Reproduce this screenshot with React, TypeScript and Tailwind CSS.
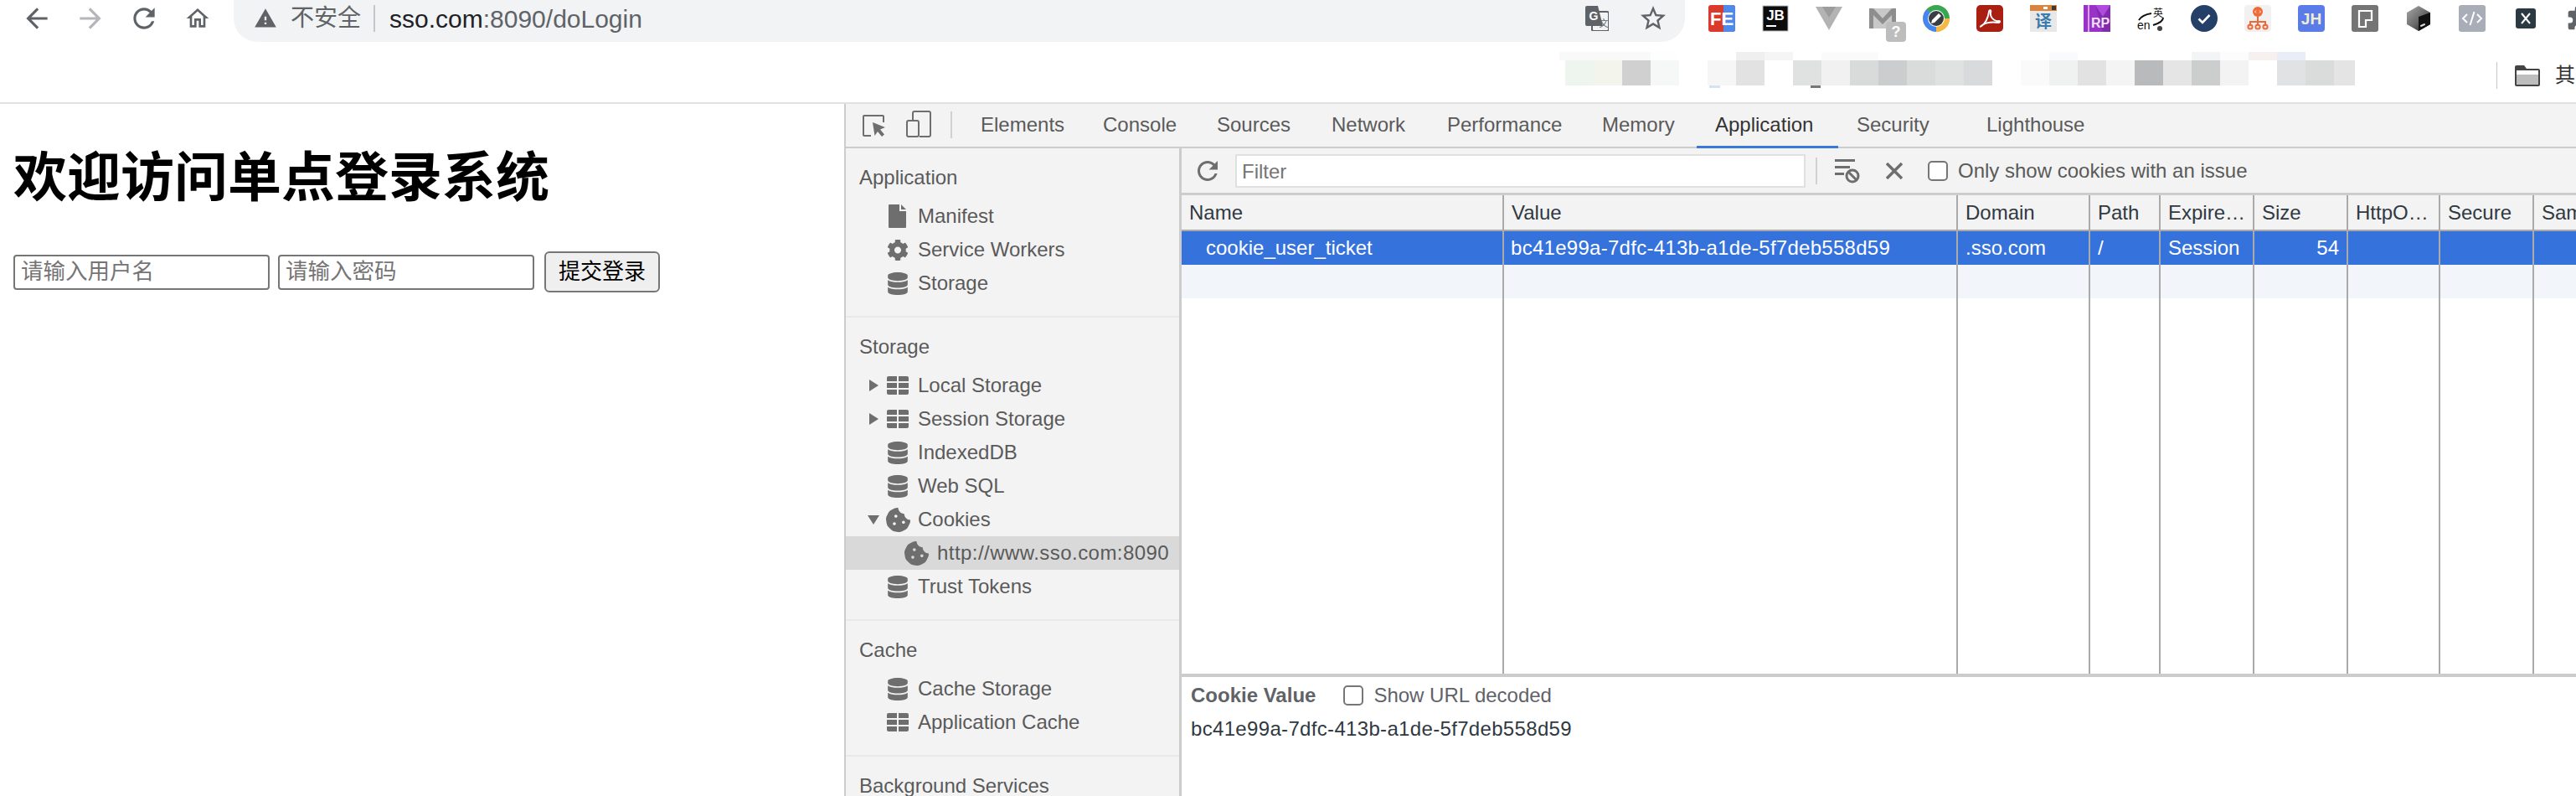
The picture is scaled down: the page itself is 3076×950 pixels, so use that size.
import { FaCog, FaCookieBite, FaDatabase } from "react-icons/fa";

const SANS = "font-['Liberation_Sans','Noto_Sans_CJK_SC',sans-serif]";

// top row of the blurred bookmarks, then the bottom row
const mosaicTop = [
  "bg-[#f8f9f8]", "bg-[#f8f9f8]", "bg-[#f8f9f8]", "bg-[#fdfefd]", "bg-white", "bg-white", "bg-[#efefef]", "bg-[#f5f5f5]", "bg-white", "bg-[#fafafa]",
  "bg-[#fafafa]", "bg-white", "bg-white", "bg-white", "bg-white", "bg-white", "bg-white", "bg-[#f9fafc]", "bg-white", "bg-white",
  "bg-white", "bg-white", "bg-[#f3f4f6]", "bg-[#fcfcfc]", "bg-[#f6f1ee]", "bg-[#e9edf8]",
];
const mosaicBottom = [
  "bg-[#eef5ee]", "bg-[#f3f5ec]", "bg-[#d0d0d0]", "bg-[#f6f7f7]", "bg-white", "bg-[#f6f6f6]", "bg-[#e2e2e2]", "bg-white", "bg-[#e0e2e2]", "bg-[#f1f1f1]",
  "bg-[#d9dbdb]", "bg-[#cbcdcf]", "bg-[#dadcdc]", "bg-[#e0e2e2]", "bg-[#d8dadc]", "bg-white", "bg-[#fafafa]", "bg-[#f0f2f2]", "bg-[#e2e2e2]", "bg-[#f4f4f4]",
  "bg-[#b9babc]", "bg-[#e5e5e5]", "bg-[#cccdcd]", "bg-[#f3f3f4]", "bg-white", "bg-[#e0e2e4]", "bg-[#dadcdb]", "bg-[#e4e4e4]",
];

const tabs = [
  { name: "Elements", w: "w-[146px]" },
  { name: "Console", w: "w-[136px]" },
  { name: "Sources", w: "w-[137px]" },
  { name: "Network", w: "w-[138px]" },
  { name: "Performance", w: "w-[185px]" },
  { name: "Memory", w: "w-[135px]" },
  { name: "Application", w: "w-[169px]", active: true },
  { name: "Security", w: "w-[155px]" },
  { name: "Lighthouse", w: "w-[150px]" },
];

const columns = [
  { name: "Name", w: "w-[385px]", cell: "cookie_user_ticket", pad: "pl-[29px]" },
  { name: "Value", w: "w-[542px]", cell: "bc41e99a-7dfc-413b-a1de-5f7deb558d59", pad: "pl-2 tracking-[0.28px]" },
  { name: "Domain", w: "w-[158px]", cell: ".sso.com", pad: "pl-[9px]" },
  { name: "Path", w: "w-[84px]", cell: "/", pad: "pl-[9px]" },
  { name: "Expire…", w: "w-[112px]", cell: "Session", pad: "pl-[9px]" },
  { name: "Size", w: "w-[112px]", cell: "54", pad: "pr-[9px] text-right" },
  { name: "HttpO…", w: "w-[110px]", cell: "", pad: "pl-2" },
  { name: "Secure", w: "w-[112px]", cell: "", pad: "pl-2" },
  { name: "SameSite", w: "w-[120px]", cell: "", pad: "pl-2" },
];

function Md({ d, className }: { d: string; className: string }) {
  return (
    <svg viewBox="0 0 24 24" className={className} fill="currentColor">
      <path d={d} />
    </svg>
  );
}

const REFRESH = "M17.65 6.35C16.2 4.9 14.21 4 12 4c-4.42 0-7.99 3.58-7.99 8s3.57 8 7.99 8c3.73 0 6.84-2.55 7.73-6h-2.08c-.82 2.33-3.04 4-5.65 4-3.31 0-6-2.69-6-6s2.69-6 6-6c1.66 0 3.14.69 4.22 1.78L13 11h7V4l-2.35 2.35z";
const ARROW = "M20 11H7.83l5.59-5.59L12 4l-8 8 8 8 1.41-1.41L7.83 13H20v-2z";

function GridIcon() {
  return (
    <svg viewBox="0 0 26 22" className="w-[26px] h-[22px]" fill="#6e6e6e">
      <path d="M0 2a2 2 0 0 1 2-2h10v6H0zM14 0h10a2 2 0 0 1 2 2v4H14zM0 8h12v6H0zM14 8h12v6H14zM0 16h12v6H2a2 2 0 0 1-2-2zM14 16h12v4a2 2 0 0 1-2 2H14z" />
    </svg>
  );
}

function FileIcon() {
  return (
    <svg viewBox="0 0 22 28" className="w-[22px] h-[28px]" fill="#6e6e6e">
      <path d="M1 0h12v8h8v19a1 1 0 0 1-1 1H1a1 1 0 0 1-1-1V1a1 1 0 0 1 1-1zM15 0l6 6h-6z" />
    </svg>
  );
}

function Tri({ open }: { open?: boolean }) {
  return (
    <svg viewBox="0 0 14 14" className="w-[14px] h-[14px]" fill="#6e6e6e">
      {open ? <path d="M0 2h14L7 13z" /> : <path d="M2 0l11 7-11 7z" />}
    </svg>
  );
}

type RowProps = { label: string; icon: "file" | "cog" | "db" | "grid" | "cookie"; arrow?: "open" | "closed"; nested?: boolean; selected?: boolean };

function SideRow({ label, icon, arrow, nested, selected }: RowProps) {
  return (
    <div className={`h-10 flex items-center whitespace-nowrap ${nested ? "pl-[71px]" : "pl-[26px]"} ${selected ? "bg-[#d9d9d9]" : ""}`}>
      {!nested && <span className="w-[23px] flex">{arrow && <Tri open={arrow === "open"} />}</span>}
      <span className="w-[26px] flex justify-center text-[#6e6e6e] text-[27px]">
        {icon === "file" && <FileIcon />}
        {icon === "cog" && <FaCog />}
        {icon === "db" && <FaDatabase />}
        {icon === "grid" && <GridIcon />}
        {icon === "cookie" && <FaCookieBite className="text-[29px] shrink-0" />}
      </span>
      <span className={nested ? "ml-[12px] tracking-[0.45px]" : "ml-[11px]"}>{label}</span>
    </div>
  );
}

function Section({ title, rows }: { title: string; rows: RowProps[] }) {
  return (
    <div className="pt-[15px] pb-[19px] border-b-2 border-[#e9e9e9] last:border-b-0">
      <div className="h-10 leading-10 pl-[16px] mb-[6px] text-[#5a5a5a]">{title}</div>
      {rows.map((r) => (
        <SideRow key={r.label} {...r} />
      ))}
    </div>
  );
}

function Checkbox() {
  return <span className="w-[24px] h-[24px] shrink-0 bg-white border-2 border-[#767676] rounded-[5px]" />;
}

// extension icons, 32px boxes
function Extensions() {
  return (
    <div className="flex items-center gap-8 ml-7 pb-[6px]">
      <svg viewBox="0 0 32 32" className="w-8 h-8">
        <rect width="32" height="32" rx="3" fill="#d93a2b" />
        <path d="M18 0h11a3 3 0 0 1 3 3v26a3 3 0 0 1-3 3H18z" fill="#4f8ae8" />
        <text x="16" y="24" textAnchor="middle" fontSize="22" fontWeight="700" fill="#fff" fontFamily="Liberation Sans">FE</text>
      </svg>
      <svg viewBox="0 0 32 32" className="w-8 h-8">
        <rect width="30" height="30" x="1" y="1" fill="#0c0c0c" stroke="#bbb" />
        <text x="16" y="18" textAnchor="middle" fontSize="17" fontWeight="700" fill="#fff" fontFamily="Liberation Sans">JB</text>
        <rect x="5" y="24" width="12" height="2" fill="#fff" />
      </svg>
      <svg viewBox="0 0 32 32" className="w-8 h-8">
        <path d="M0 2h32L16 30z" fill="#b3b3b3" />
        <path d="M8 2h16l-8 13z" fill="#9c9c9c" />
      </svg>
      <div className="relative w-8 h-8">
        <svg viewBox="0 0 32 32" className="w-8 h-8">
          <rect y="4" width="32" height="24" fill="#c8c8c8" />
          <path d="M0 4h5l11 12L27 4h5v24h-5V12L16 23 5 12v16H0z" fill="#8e8e8e" />
        </svg>
        <span className="absolute left-[20px] top-[20px] w-[24px] h-[24px] rounded-[4px] bg-[#bdbdbd] text-white text-[18px] font-bold leading-[24px] text-center">?</span>
      </div>
      <svg viewBox="0 0 32 32" className="w-8 h-8">
        <circle cx="16" cy="16" r="16" fill="#f4b942" />
        <path d="M16 16L32 16A16 16 0 0 0 4.5 5z" fill="#34a853" />
        <path d="M16 16L4.5 5A16 16 0 0 0 16 32z" fill="#4285f4" />
        <path d="M16 16L16 32A16 16 0 0 0 32 16z" fill="#f4b942" />
        <circle cx="16" cy="16" r="10" fill="#fff" />
        <circle cx="16" cy="16" r="9" fill="#3a3d42" />
        <path d="M10 22l1-4 8-8 3 3-8 8z" fill="#fff" />
      </svg>
      <svg viewBox="0 0 32 32" className="w-8 h-8">
        <rect width="32" height="32" rx="5" fill="#a91f12" />
        <path d="M6 25c4-2 8-9 9-17 .3-3 3-2 2 1-1 6 5 11 10 10 2 0 1 2-1 2-7-1-13-1-19 3-2 2-3 2-1 1z" fill="none" stroke="#fff" strokeWidth="2" />
      </svg>
      <svg viewBox="0 0 32 32" className="w-8 h-8">
        <rect width="32" height="32" fill="#e8e8e8" />
        <rect width="32" height="7" fill="#d9843f" />
        <rect x="16" y="2" width="5" height="3" fill="#fff" />
        <rect x="26" y="1" width="5" height="5" fill="#3a3a3a" />
        <text x="16" y="27" textAnchor="middle" fontSize="20" fontWeight="700" fill="#3d7bad" fontFamily="Noto Sans CJK SC">译</text>
      </svg>
      <svg viewBox="0 0 32 32" className="w-8 h-8">
        <rect width="32" height="32" fill="#9a32c9" />
        <path d="M14 0h18v32h-9z" fill="#7a2aa6" opacity="0.8" />
        <path d="M14 0h18L23 14z" fill="#b14be0" />
        <rect x="5" width="2" height="32" fill="#d9a6ee" />
        <text x="20" y="27" textAnchor="middle" fontSize="16" fontWeight="700" fill="#f2e3fa" fontFamily="Liberation Sans">RP</text>
      </svg>
      <svg viewBox="0 0 32 32" className="w-8 h-8">
        <text x="19" y="14" fontSize="12" fill="#111" fontFamily="Noto Sans CJK SC">英</text>
        <text x="0" y="29" fontSize="14" fill="#111" fontFamily="Liberation Sans">en</text>
        <path d="M2 18C5 13 10 11 17 10M31 15c0 4-5 7-12 9" fill="none" stroke="#111" strokeWidth="2" />
        <circle cx="27" cy="28" r="3" fill="#444" />
      </svg>
      <svg viewBox="0 0 32 32" className="w-8 h-8">
        <circle cx="16" cy="16" r="16" fill="#254068" />
        <path d="M9.5 16.5l4.5 4.5 8.5-9" fill="none" stroke="#fff" strokeWidth="2.6" />
      </svg>
      <svg viewBox="0 0 32 32" className="w-8 h-8">
        <rect width="32" height="32" rx="4" fill="#f1f1f1" />
        <g fill="none" stroke="#ee6a3a" strokeWidth="2">
          <path d="M16 13v6M7 25v-5h18v5M16 19v6" />
          <circle cx="7" cy="26" r="2.6" />
          <circle cx="16" cy="26" r="2.6" />
          <circle cx="25" cy="26" r="2.6" />
        </g>
        <circle cx="16" cy="8" r="6" fill="#ee6a3a" />
        <path d="M14 6.5L12.5 8 14 9.5M18 6.5L19.5 8 18 9.5" fill="none" stroke="#fff" strokeWidth="0.9" />
      </svg>
      <svg viewBox="0 0 32 32" className="w-8 h-8">
        <rect width="32" height="32" rx="4" fill="#5b7ce8" />
        <text x="16" y="23" textAnchor="middle" fontSize="19" fontWeight="700" fill="#f1edd4" fontFamily="Liberation Sans">JH</text>
      </svg>
      <svg viewBox="0 0 32 32" className="w-8 h-8">
        <rect width="32" height="32" rx="3" fill="#757575" />
        <path d="M9 7h15v11h-7v8H9z" fill="none" stroke="#fff" strokeWidth="2.2" />
      </svg>
      <svg viewBox="0 0 32 32" className="w-8 h-8">
        <defs>
          <linearGradient id="cube" x1="0" x2="1" y1="0" y2="1">
            <stop offset="0" stopColor="#aaa" />
            <stop offset="0.55" stopColor="#666" />
            <stop offset="1" stopColor="#111" />
          </linearGradient>
        </defs>
        <path d="M16 1l14 8v14l-14 8-14-8V9z" fill="url(#cube)" />
        <path d="M16 14l14-5v14l-14 8z" fill="#111" />
        <rect x="18" y="23" width="6" height="2" fill="#ddd" transform="rotate(-25 21 24)" />
      </svg>
      <svg viewBox="0 0 32 32" className="w-8 h-8">
        <rect width="32" height="32" rx="3" fill="#a9adb8" />
        <path d="M10 11l-5 5 5 5M22 11l5 5-5 5M18.5 8l-5 16" fill="none" stroke="#fff" strokeWidth="2" />
      </svg>
      <svg viewBox="0 0 32 32" className="w-8 h-8">
        <rect x="4" y="4" width="24" height="24" rx="3" fill="#2b3a42" />
        <path d="M11 10l10 12M21 10L11 22" fill="none" stroke="#fff" strokeWidth="2" />
      </svg>
      <svg viewBox="0 0 24 24" className="w-8 h-8 shrink-0" fill="#5f6368">
        <path d="M20.5 11H19V7a2 2 0 0 0-2-2h-4V3.5a2.5 2.5 0 0 0-5 0V5H4a2 2 0 0 0-2 2v3.8h1.5a2.7 2.7 0 0 1 0 5.4H2V20a2 2 0 0 0 2 2h3.8v-1.5a2.7 2.7 0 0 1 5.4 0V22H17a2 2 0 0 0 2-2v-4h1.5a2.5 2.5 0 0 0 0-5z" />
      </svg>
    </div>
  );
}

export default function App() {
  return (
    <div className={`w-[3076px] h-[950px] overflow-hidden bg-white flex flex-col ${SANS}`}>
      {/* chrome toolbar */}
      <div className="h-[50px] shrink-0 flex items-center overflow-hidden">
        <div className="flex items-center gap-[26px] pl-[25px] pb-[6px]">
          <Md d={ARROW} className="w-[38px] h-[38px] text-[#5f6368]" />
          <Md d={ARROW} className="w-[38px] h-[38px] text-[#b4b6b9] -scale-x-100" />
          <Md d={REFRESH} className="w-[38px] h-[38px] text-[#5f6368]" />
          <Md d="M12 5.69l5 4.5V18h-2v-6H9v6H7v-7.81l5-4.5M12 3L2 12h3v8h6v-6h2v6h6v-8h3L12 3z" className="ml-[3px] w-8 h-8 text-[#5f6368]" />
        </div>
        <div className="ml-[27px] w-[1733px] h-[50px] shrink-0 bg-[#f1f3f4] rounded-b-[28px] flex items-center pl-[24px] pr-[20px] pb-[6px] whitespace-nowrap">
          <Md d="M1 21h22L12 2 1 21zm12-3h-2v-2h2v2zm0-4h-2v-4h2v4z" className="w-7 h-7 text-[#5f6368]" />
          <span className="ml-[16px] text-[28px] text-[#5f6368]">不安全</span>
          <span className="ml-[15px] w-[2px] h-8 bg-[#c4c6c9]" />
          <span className="ml-[17px] text-[30px] text-[#5f6368]">
            <span className="text-[#202124]">sso.com</span>:8090/doLogin
          </span>
          <div className="ml-auto flex items-center gap-[35px]">
            <svg viewBox="0 0 28 30" className="w-[28px] h-[30px]">
              <rect x="8" y="7" width="20" height="23" rx="2" fill="#f1f3f4" stroke="#5f6368" strokeWidth="2" />
              <path d="M2 0h13l6 24H2a2 2 0 0 1-2-2V2a2 2 0 0 1 2-2z" fill="#5f6368" />
              <text x="10" y="17" textAnchor="middle" fontSize="14" fontWeight="700" fill="#fff" fontFamily="Liberation Sans">G</text>
              <text x="22" y="25" textAnchor="middle" fontSize="11" fill="#5f6368" fontFamily="Noto Sans CJK SC">文</text>
            </svg>
            <Md d="M22 9.24l-7.19-.62L12 2 9.19 8.63 2 9.24l5.46 4.73L5.82 21 12 17.27 18.18 21l-1.63-7.03L22 9.24zM12 15.4l-3.76 2.27 1-4.28-3.32-2.88 4.38-.38L12 6.1l1.71 4.04 4.38.38-3.32 2.88 1 4.28L12 15.4z" className="w-9 h-9 text-[#5f6368]" />
          </div>
        </div>
        <Extensions />
      </div>

      {/* bookmarks bar */}
      <div className="h-[74px] shrink-0 border-b-2 border-[#dfe1e5] flex items-start pt-[12px] pl-[1862px] whitespace-nowrap">
        <div className="w-[1119px] shrink-0 flex flex-col">
          <div className="flex h-[10px]">
            <span className="w-[7px] bg-[#f8f9f8]" />
            {mosaicTop.map((c, i) => (
              <span key={i} className={`w-[34px] ${c}`} />
            ))}
          </div>
          <div className="flex h-[30px] w-[950px] overflow-hidden pl-[7px]">
            {mosaicBottom.map((c, i) => (
              <span key={i} className={`w-[34px] shrink-0 ${c}`} />
            ))}
          </div>
          <div className="flex h-[3px] pl-[179px]">
            <span className="w-[13px] bg-[#d8e0f5]" />
            <span className="ml-[108px] w-[12px] bg-[#777]" />
          </div>
        </div>
        <span className="mt-[12px] w-[1px] h-[32px] bg-[#c4c6c9]" />
        <svg viewBox="0 0 30 26" className="ml-[21px] mt-[15px] w-[30px] h-[26px]">
          <path d="M2 1h9l3 4h14a2 2 0 0 1 2 2v17a2 2 0 0 1-2 2H2a2 2 0 0 1-2-2V3a2 2 0 0 1 2-2z" fill="#444" />
          <path d="M2 7h26v5H2z" fill="#fff" />
          <path d="M2 12h26v12H2z" fill="#bdbdbd" />
        </svg>
        <span className="ml-[18px] mt-[12px] text-[24px] leading-[32px] text-[#333]">其</span>
      </div>

      <div className="flex-1 flex min-h-0">
        {/* page */}
        <div className="w-[1008px] shrink-0 pl-4 text-black">
          <h1 className="pt-[45px] text-[64px] leading-[74px] font-bold font-['Noto_Sans_CJK_SC',sans-serif]">欢迎访问单点登录系统</h1>
          <form className="mt-[57px] flex items-center text-[26.5px]">
            <input placeholder="请输入用户名" className="w-[306px] h-[42px] pl-[7px] pr-[6px] border-2 border-[#767676] rounded-[4px] placeholder:text-[#757575]" />
            <input placeholder="请输入密码" className="ml-[10px] w-[306px] h-[42px] pl-[7px] pr-[6px] border-2 border-[#767676] rounded-[4px] placeholder:text-[#757575]" />
            <button type="button" className="ml-[12px] w-[138px] h-[49px] text-[26px] bg-[#efefef] border-2 border-[#767676] rounded-[6px]">提交登录</button>
          </form>
        </div>

        {/* devtools */}
        <div className="flex-1 min-w-0 flex flex-col border-l-2 border-[#ccc] text-[24px] text-[#5a5a5a] overflow-hidden">
          <div className="h-[53px] shrink-0 bg-[#f3f3f3] border-b-2 border-[#ccc] flex items-start pl-[20px] whitespace-nowrap">
            <svg viewBox="0 0 28 26" className="mt-[13px] w-[28px] h-[26px]" fill="none" stroke="#6e6e6e" strokeWidth="2">
              <path d="M10 25H2a1 1 0 0 1-1-1V2a1 1 0 0 1 1-1h22a1 1 0 0 1 1 1v7" />
              <path d="M12 9l15 6-6 2.5 5 6-3 2.5-5-6-3.500 5z" fill="#6e6e6e" stroke="none" />
            </svg>
            <svg viewBox="0 0 30 32" className="ml-[24px] mt-[8px] w-[30px] h-[32px]" fill="none" stroke="#6e6e6e" strokeWidth="2">
              <path d="M8 12V3a2 2 0 0 1 2-2h17a2 2 0 0 1 2 2v26a2 2 0 0 1-2 2H16" />
              <rect x="1" y="12" width="14" height="19" rx="2" />
            </svg>
            <span className="ml-[23px] mt-[9px] w-[2px] h-[32px] bg-[#d0d0d0]" />
            <div className="ml-[12px] flex">
              {tabs.map((t) => (
                <div key={t.name} className={`h-[53px] leading-[50px] pl-[22px] ${t.w} ${t.active ? "border-b-[3px] border-[#3879d9] text-[#333]" : ""}`}>
                  {t.name}
                </div>
              ))}
            </div>
          </div>

          <div className="flex-1 flex min-h-0">
            {/* sidebar */}
            <div className="w-[401px] shrink-0 bg-[#f3f3f3] border-r-[3px] border-[#ccc] overflow-hidden">
              <Section
                title="Application"
                rows={[
                  { label: "Manifest", icon: "file" },
                  { label: "Service Workers", icon: "cog" },
                  { label: "Storage", icon: "db" },
                ]}
              />
              <Section
                title="Storage"
                rows={[
                  { label: "Local Storage", icon: "grid", arrow: "closed" },
                  { label: "Session Storage", icon: "grid", arrow: "closed" },
                  { label: "IndexedDB", icon: "db" },
                  { label: "Web SQL", icon: "db" },
                  { label: "Cookies", icon: "cookie", arrow: "open" },
                  { label: "http://www.sso.com:8090", icon: "cookie", nested: true, selected: true },
                  { label: "Trust Tokens", icon: "db" },
                ]}
              />
              <Section
                title="Cache"
                rows={[
                  { label: "Cache Storage", icon: "db" },
                  { label: "Application Cache", icon: "grid" },
                ]}
              />
              <Section title="Background Services" rows={[]} />
            </div>

            {/* cookie panel */}
            <div className="flex-1 min-w-0 flex flex-col">
              <div className="h-[56px] shrink-0 bg-[#f3f3f3] border-b-[3px] border-[#ccc] flex items-center pl-[13px] whitespace-nowrap">
                <Md d={REFRESH} className="w-[36px] h-[36px] text-[#6e6e6e]" />
                <input placeholder="Filter" className="ml-[15px] w-[681px] h-[40px] px-[6px] pt-[2px] bg-white border-2 border-[#e0e0e0] placeholder:text-[#757575]" />
                <span className="ml-[12px] w-[2px] h-[32px] bg-[#d0d0d0]" />
                <svg viewBox="0 0 30 30" className="ml-[21px] w-[30px] h-[30px]" fill="#6e6e6e">
                  <path d="M0 1h24v3H0zM0 9h18v3H0zM0 17h11v3H0z" />
                  <circle cx="21" cy="21" r="7" fill="none" stroke="#6e6e6e" strokeWidth="3" />
                  <path d="M16 16l10 10" stroke="#6e6e6e" strokeWidth="3" />
                </svg>
                <svg viewBox="0 0 20 20" className="ml-[31px] w-[20px] h-[20px]" stroke="#6e6e6e" strokeWidth="3.500">
                  <path d="M1 1l18 18M19 1L1 19" />
                </svg>
                <span className="ml-[30px] flex"><Checkbox /></span>
                <span className="ml-[12px]">Only show cookies with an issue</span>
              </div>

              <div className="flex-1 min-h-0 flex overflow-hidden whitespace-nowrap text-[#303942]">
                {columns.map((c) => (
                  <div key={c.name} className={`${c.w} shrink-0 flex flex-col border-r-2 border-[#aaa] last:border-r-0`}>
                    <div className="h-[43px] shrink-0 leading-[41px] pl-[9px] bg-[#f3f3f3] border-b-[2px] border-[#aaa] overflow-hidden">{c.name}</div>
                    <div className={`h-[40px] shrink-0 leading-[40px] bg-[#3572dc] text-white ${c.pad}`}>{c.cell}</div>
                    <div className="h-[40px] shrink-0 bg-[#f2f6fb]" />
                  </div>
                ))}
              </div>

              <div className="h-[146px] shrink-0 border-t-4 border-[#ccc] pl-[11px] whitespace-nowrap">
                <div className="h-[44px] flex items-center text-[#5f6368]">
                  <span className="font-bold">Cookie Value</span>
                  <span className="ml-[33px] flex"><Checkbox /></span>
                  <span className="ml-[12px]">Show URL decoded</span>
                </div>
                <div className="h-[36px] leading-[36px] text-[#303942] tracking-[0.33px]">bc41e99a-7dfc-413b-a1de-5f7deb558d59</div>
              </div>
            </div>
          </div>
        </div>
      </div>
    </div>
  );
}
